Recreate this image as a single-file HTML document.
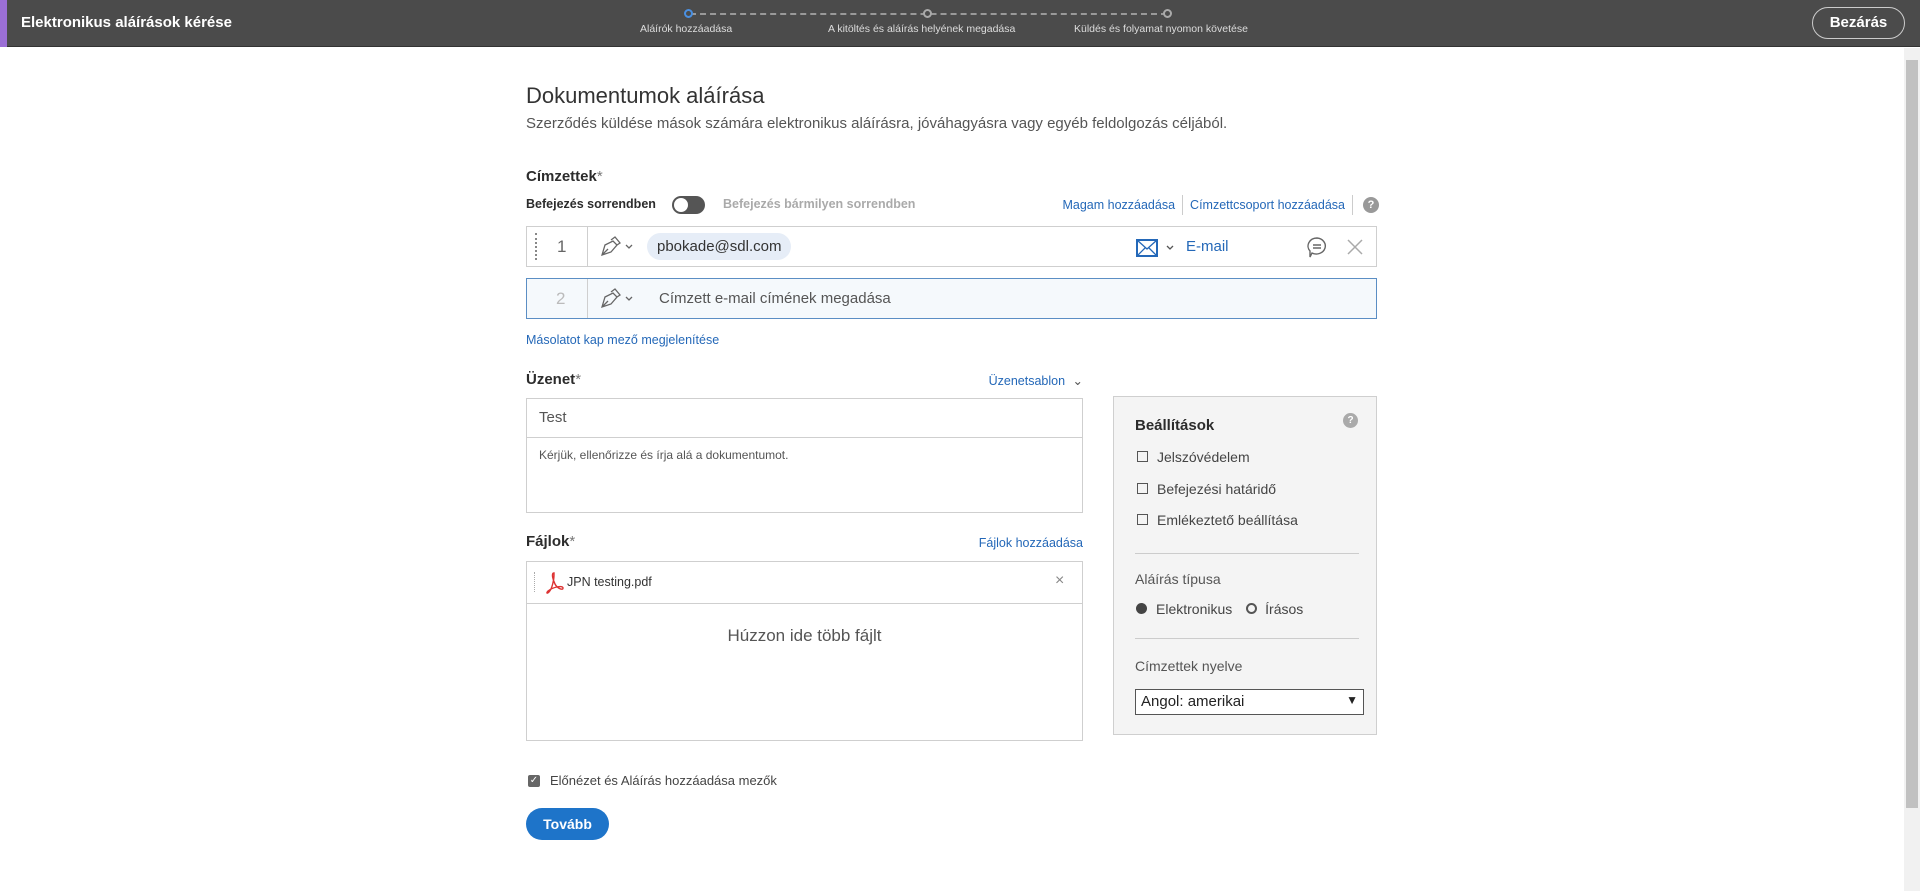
<!DOCTYPE html>
<html><head><meta charset="utf-8"><style>
*{box-sizing:border-box;margin:0;padding:0}
body{width:1920px;height:891px;background:#fff;font-family:"Liberation Sans",sans-serif;color:#2c2c2c;position:relative;overflow:hidden}
.a{position:absolute;white-space:nowrap}
.hdr{position:absolute;left:0;top:0;width:1920px;height:47px;background:#4b4b4b;border-bottom:1px solid #333}
.link{color:#2468b8}
.box{position:absolute;border:1px solid #cfcfcf;background:#fff}
.cb{display:inline-block;width:11px;height:11px;border:1.5px solid #555;vertical-align:middle;margin-right:9px;position:relative;top:-2px}
</style></head><body>
<div class="hdr">
 <div class="a" style="left:0;top:0;width:7px;height:47px;background:#9b6fd6"></div>
 <div class="a" style="left:21px;top:14px;font-size:15px;font-weight:bold;color:#fff">Elektronikus aláírások kérése</div>
 <div class="a" style="left:690px;top:13px;width:477px;border-top:2px dashed #999"></div>
 <div class="a" style="left:684px;top:9px;width:9px;height:9px;border-radius:50%;border:2px solid #4a90e2;background:#4b4b4b"></div>
 <div class="a" style="left:923px;top:9px;width:9px;height:9px;border-radius:50%;border:2px solid #aaa;background:#4b4b4b"></div>
 <div class="a" style="left:1163px;top:9px;width:9px;height:9px;border-radius:50%;border:2px solid #aaa;background:#4b4b4b"></div>
 <div class="a" style="left:640px;top:23px;font-size:10.5px;color:#ddd">Aláírók hozzáadása</div>
 <div class="a" style="left:828px;top:23px;font-size:10.5px;color:#ddd">A kitöltés és aláírás helyének megadása</div>
 <div class="a" style="left:1074px;top:23px;font-size:10.5px;color:#ddd">Küldés és folyamat nyomon követése</div>
 <div class="a" style="left:1812px;top:7px;width:93px;height:32px;border:1.5px solid #ccc;border-radius:16px;color:#fff;font-size:15px;font-weight:bold;text-align:center;line-height:29px">Bezárás</div>
</div>
<div class="a" style="left:1904px;top:48px;width:16px;height:843px;background:#f1f1f1"></div>
<div class="a" style="left:1906px;top:60px;width:12px;height:748px;background:#c1c1c1"></div>

<div class="a" style="left:526px;top:83px;font-size:22px;color:#333">Dokumentumok aláírása</div>
<div class="a" style="left:526px;top:115px;font-size:15px;color:#555">Szerződés küldése mások számára elektronikus aláírásra, jóváhagyásra vagy egyéb feldolgozás céljából.</div>

<div class="a" style="left:526px;top:168px;font-size:15px;font-weight:bold">Címzettek<span style="font-weight:normal;color:#777">*</span></div>
<div class="a" style="left:526px;top:197px;font-size:12.5px;font-weight:bold">Befejezés sorrendben</div>
<div class="a" style="left:672px;top:196px;width:33px;height:18px;border-radius:9px;background:#555"><div style="position:absolute;left:2px;top:2px;width:14px;height:14px;border-radius:50%;background:#fff"></div></div>
<div class="a" style="left:723px;top:197px;font-size:12.5px;font-weight:bold;color:#aaa">Befejezés bármilyen sorrendben</div>
<div class="a" style="right:541px;top:195px;display:flex;align-items:center;font-size:12.5px;height:20px">
 <span class="link">Magam hozzáadása</span>
 <span style="height:20px;border-left:1px solid #ccc;margin:0 7px"></span>
 <span class="link">Címzettcsoport hozzáadása</span>
 <span style="height:20px;border-left:1px solid #ccc;margin:0 10px 0 7px"></span>
 <span style="width:16px;height:16px;border-radius:50%;background:#999;color:#fff;font-size:11px;font-weight:bold;text-align:center;line-height:16px">?</span>
</div>

<div class="box" style="left:526px;top:226px;width:851px;height:41px">
 <div class="a" style="left:8px;top:6px;height:27px;border-left:2px dotted #888"></div>
 <div class="a" style="left:30px;top:10px;font-size:17px;color:#666">1</div>
 <div class="a" style="left:60px;top:0;height:39px;border-left:1px solid #cfcfcf"></div>
 <svg class="a" style="left:72px;top:9px" width="40" height="22"><path d="M3 19 L6 9 L14 5 L18 9 L12 16 Z M3 19 L9 13 M12 4 L16 1 L21 7 L18 9" fill="none" stroke="#666" stroke-width="1.3"/><path d="M27 9 l3 3 l3 -3" fill="none" stroke="#666" stroke-width="1.3"/></svg>
 <div class="a" style="left:120px;top:6px;height:27px;padding:0 10px;border-radius:14px;background:#e6edf7;font-size:15px;line-height:27px;color:#333">pbokade@sdl.com</div>
 <svg class="a" style="left:609px;top:12px" width="56" height="18"><rect x="1" y="1" width="20" height="16" fill="none" stroke="#2468b8" stroke-width="2"/><path d="M1 1 L11 10 L21 1 M1 17 L9 9 M21 17 L13 9" fill="none" stroke="#2468b8" stroke-width="1.3"/><path d="M31 7 l3 3 l3 -3" fill="none" stroke="#555" stroke-width="1.3"/></svg>
 <div class="a link" style="left:659px;top:11px;font-size:15px">E-mail</div>
 <svg class="a" style="left:778px;top:9px" width="24" height="24"><path d="M12 2 a9 8 0 1 1 -5 15 l-2 4 l0 -6 a9 8 0 0 1 7 -13 Z M8 9 h8 M8 12 h8" fill="none" stroke="#666" stroke-width="1.4"/></svg>
 <svg class="a" style="left:820px;top:12px" width="16" height="16"><path d="M1 1 L15 15 M15 1 L1 15" stroke="#aaa" stroke-width="1.5"/></svg>
</div>
<div class="box" style="left:526px;top:278px;width:851px;height:41px;border-color:#5b8ec4;background:#f5f9fc">
 <div class="a" style="left:29px;top:10px;font-size:17px;color:#bbb">2</div>
 <div class="a" style="left:60px;top:0;height:39px;border-left:1px solid #cfcfcf"></div>
 <svg class="a" style="left:72px;top:9px" width="40" height="22"><path d="M3 19 L6 9 L14 5 L18 9 L12 16 Z M3 19 L9 13 M12 4 L16 1 L21 7 L18 9" fill="none" stroke="#666" stroke-width="1.3"/><path d="M27 9 l3 3 l3 -3" fill="none" stroke="#666" stroke-width="1.3"/></svg>
 <div class="a" style="left:132px;top:11px;font-size:15px;color:#555">Címzett e-mail címének megadása</div>
</div>
<div class="a link" style="left:526px;top:333px;font-size:12.5px">Másolatot kap mező megjelenítése</div>

<div class="a" style="left:526px;top:371px;font-size:15px;font-weight:bold">Üzenet<span style="font-weight:normal;color:#777">*</span></div>
<div class="a link" style="right:837px;top:373px;font-size:12.5px">Üzenetsablon <span style="color:#555;margin-left:4px">&#8964;</span></div>
<div class="box" style="left:526px;top:398px;width:557px;height:115px">
 <div class="a" style="left:12px;top:10px;font-size:15px;color:#555">Test</div>
 <div class="a" style="left:0;top:38px;width:555px;border-top:1px solid #cfcfcf"></div>
 <div class="a" style="left:12px;top:49px;font-size:12px;color:#555">Kérjük, ellenőrizze és írja alá a dokumentumot.</div>
</div>

<div class="a" style="left:526px;top:533px;font-size:15px;font-weight:bold">Fájlok<span style="font-weight:normal;color:#777">*</span></div>
<div class="a link" style="right:837px;top:536px;font-size:12.5px">Fájlok hozzáadása</div>
<div class="box" style="left:526px;top:561px;width:557px;height:180px">
 <div class="a" style="left:7px;top:10px;height:20px;border-left:1px dotted #aaa"></div>
 <svg class="a" style="left:18px;top:10px" width="20" height="22"><path d="M9 1 C6 1 8 8 10 12 C12 16 18 19 18 16 C18 13 8 15 3 19 C1 21 2 22 4 20 C7 17 9 8 9 3 Z" fill="none" stroke="#d33" stroke-width="1.4"/></svg>
 <div class="a" style="left:40px;top:13px;font-size:12.5px;color:#333">JPN testing.pdf</div>
 <div class="a" style="left:528px;top:10px;font-size:16px;color:#888">×</div>
 <div class="a" style="left:0;top:41px;width:555px;border-top:1px solid #cfcfcf"></div>
 <div class="a" style="left:0;top:64px;width:555px;text-align:center;font-size:17px;color:#555">Húzzon ide több fájlt</div>
</div>

<div class="a" style="left:1113px;top:396px;width:264px;height:339px;background:#f4f4f4;border:1px solid #cfcfcf">
 <div class="a" style="left:21px;top:20px;font-size:15px;font-weight:bold">Beállítások</div>
 <div class="a" style="left:229px;top:16px;width:15px;height:15px;border-radius:50%;background:#aaa;color:#fff;font-size:10px;font-weight:bold;text-align:center;line-height:15px">?</div>
 <div class="a" style="left:23px;top:52px;font-size:14px;color:#444"><span class="cb"></span>Jelszóvédelem</div>
 <div class="a" style="left:23px;top:84px;font-size:14px;color:#444"><span class="cb"></span>Befejezési határidő</div>
 <div class="a" style="left:23px;top:115px;font-size:14px;color:#444"><span class="cb"></span>Emlékeztető beállítása</div>
 <div class="a" style="left:21px;top:156px;width:224px;border-top:1px solid #ccc"></div>
 <div class="a" style="left:21px;top:174px;font-size:14px;color:#555">Aláírás típusa</div>
 <div class="a" style="left:22px;top:204px;font-size:14px;color:#444"><span style="display:inline-block;width:11px;height:11px;border-radius:50%;background:#444;margin-right:9px"></span>Elektronikus <span style="display:inline-block;width:11px;height:11px;border-radius:50%;border:2px solid #555;margin:0 8px 0 10px"></span>Írásos</div>
 <div class="a" style="left:21px;top:241px;width:224px;border-top:1px solid #ccc"></div>
 <div class="a" style="left:21px;top:261px;font-size:14px;color:#555">Címzettek nyelve</div>
 <div class="a" style="left:21px;top:292px;width:229px;height:26px;border:1px solid #555;background:#fff;font-size:15px;padding:3px 5px;color:#222">Angol: amerikai<span style="position:absolute;right:5px;top:3px;font-size:12px">&#9660;</span></div>
</div>

<div class="a" style="left:528px;top:775px;width:12px;height:12px;border-radius:2px;background:#666;color:#fff;font-size:10px;line-height:12px;text-align:center">✓</div>
<div class="a" style="left:550px;top:773px;font-size:13px;color:#444">Előnézet és Aláírás hozzáadása mezők</div>
<div class="a" style="left:526px;top:808px;width:83px;height:32px;border-radius:16px;background:#1e74c9;color:#fff;font-size:14px;font-weight:bold;text-align:center;line-height:32px">Tovább</div>
</body></html>
